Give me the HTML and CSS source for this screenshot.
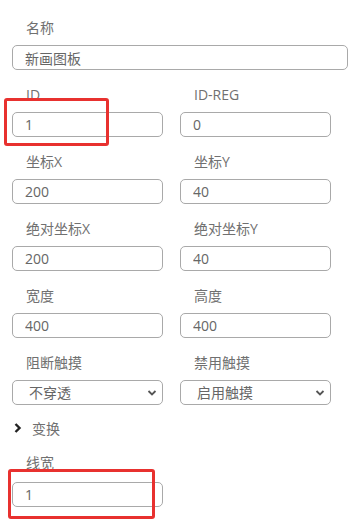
FILE: index.html
```html
<!DOCTYPE html>
<html lang="zh-CN">
<head>
    <meta charset="UTF-8">
    <meta name="viewport" content="width=device-width, initial-scale=1.0">
    <title>属性</title>
    <link rel="stylesheet" href="styles.css">
</head>
<body>
    <form class="props">
        <div class="field">
            <label class="field-label">名称</label>
            <input class="field-input wide" type="text" value="新画图板">
        </div>
        <div class="row">
            <div class="field">
                <label class="field-label">ID</label>
                <input class="field-input" type="text" value="1">
            </div>
            <div class="field">
                <label class="field-label">ID-REG</label>
                <input class="field-input" type="text" value="0">
            </div>
        </div>
        <div class="row">
            <div class="field">
                <label class="field-label">坐标X</label>
                <input class="field-input" type="text" value="200">
            </div>
            <div class="field">
                <label class="field-label">坐标Y</label>
                <input class="field-input" type="text" value="40">
            </div>
        </div>
        <div class="row">
            <div class="field">
                <label class="field-label">绝对坐标X</label>
                <input class="field-input" type="text" value="200">
            </div>
            <div class="field">
                <label class="field-label">绝对坐标Y</label>
                <input class="field-input" type="text" value="40">
            </div>
        </div>
        <div class="row">
            <div class="field">
                <label class="field-label">宽度</label>
                <input class="field-input" type="text" value="400">
            </div>
            <div class="field">
                <label class="field-label">高度</label>
                <input class="field-input" type="text" value="400">
            </div>
        </div>
        <div class="row">
            <div class="field">
                <label class="field-label">阻断触摸</label>
                <div class="select-wrap">
                    <select class="field-select">
                        <option>不穿透</option>
                        <option>穿透</option>
                    </select>
                    <svg class="select-arrow" viewBox="0 0 10 6" width="10" height="6"><path d="M1.5 1 L5 4.5 L8.5 1" fill="none" stroke="#555" stroke-width="1.8"/></svg>
                </div>
            </div>
            <div class="field">
                <label class="field-label">禁用触摸</label>
                <div class="select-wrap">
                    <select class="field-select">
                        <option>启用触摸</option>
                        <option>禁用触摸</option>
                    </select>
                    <svg class="select-arrow" viewBox="0 0 10 6" width="10" height="6"><path d="M1.5 1 L5 4.5 L8.5 1" fill="none" stroke="#555" stroke-width="1.8"/></svg>
                </div>
            </div>
        </div>
        <div class="group">
            <svg class="group-arrow" viewBox="0 0 8 10" width="8" height="10"><path d="M1.5 1 L5.5 5 L1.5 9" fill="none" stroke="#222" stroke-width="2.4"/></svg>
            <span>变换</span>
        </div>
        <div class="row line-row">
            <div class="field">
                <label class="field-label">线宽</label>
                <input class="field-input" type="text" value="1">
            </div>
        </div>
    </form>

    <div class="mark mark-id"></div>
    <div class="mark mark-line"></div>
</body>
</html>
```

FILE: styles.css
```css
html {
    box-sizing: border-box;
    font-family: "Open Sans", "Noto Sans CJK SC", sans-serif;
    font-size: 14px;
}

*,
*:before,
*:after {
    box-sizing: inherit;
}

body {
    margin: 0;
    position: relative;
    background-color: #fff;
    color: #707070;
}

.props {
    padding: 18px 5px 0 12px;
}

.field {
    margin-bottom: 15px;
}

.field-label {
    display: block;
    height: 20px;
    line-height: 20px;
    padding-left: 14px;
    margin-bottom: 7px;
    color: #707070;
}

.field-input,
.field-select {
    display: block;
    width: 90%;
    height: 25px;
    margin: 0;
    padding: 0 12px;
    border: 1px solid #a9a9a9;
    border-radius: 5px;
    font-family: inherit;
    font-size: 14px;
    color: #666;
    background-color: #fff;
    outline: none;
}

.field-input.wide {
    width: 100%;
}

.row {
    display: grid;
    grid-template-columns: 1fr 1fr;
}

.select-wrap {
    position: relative;
    width: 90%;
}

.field-select {
    width: 100%;
    padding-left: 16px;
    -webkit-appearance: none;
    appearance: none;
}

.select-arrow {
    position: absolute;
    right: 6px;
    top: 10px;
    pointer-events: none;
}

.group {
    display: flex;
    align-items: center;
    height: 20px;
    margin-top: -2px;
    padding-left: 2px;
    gap: 10px;
    color: #707070;
}

.line-row {
    margin-top: 15px;
}

.line-row .field-label {
    margin-bottom: 9px;
}

.mark {
    position: absolute;
    border: 3px solid #e8312f;
    border-radius: 3px;
}

.mark-id {
    left: 4px;
    top: 98px;
    width: 105px;
    height: 48px;
}

.mark-line {
    left: 8px;
    top: 469px;
    width: 147px;
    height: 50px;
}
```
